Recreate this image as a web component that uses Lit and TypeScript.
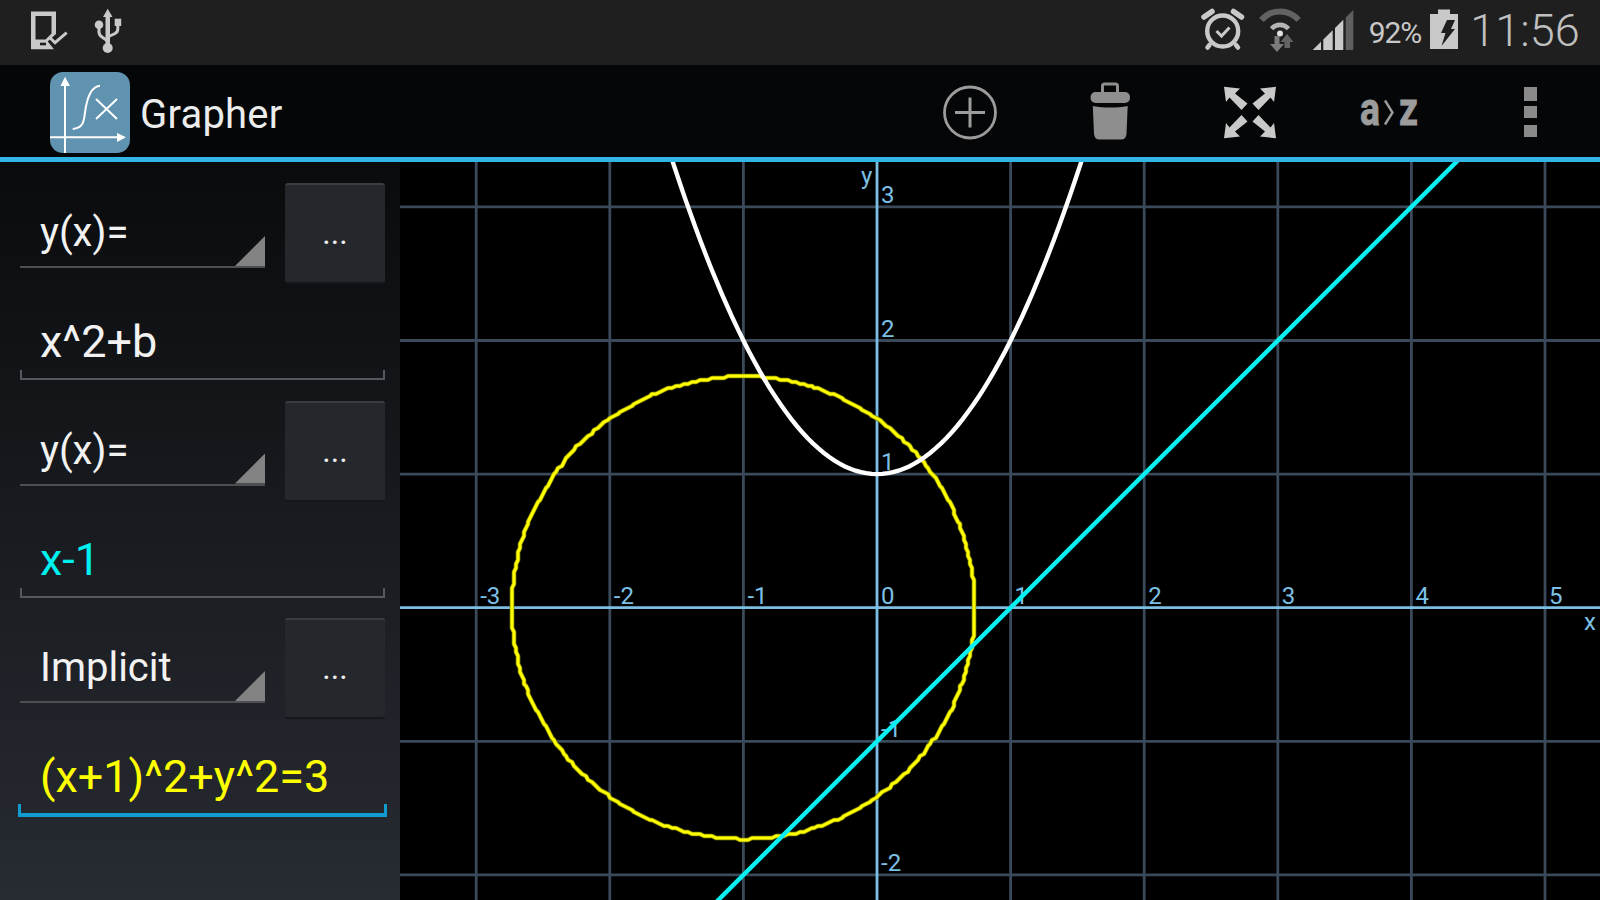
import { LitElement, html, css, svg } from "lit";
import { customElement } from "lit/decorators.js";

const OX = 877, OY = 607.7, U = 133.6;
const px = (v: number) => +(OX + v * U).toFixed(1);
const py = (v: number) => +(OY - v * U).toFixed(1);

function parabola() {
  const pts: string[] = [];
  for (let x = -1.6; x <= 1.6001; x += 0.04) pts.push(`${px(x)},${py(x * x + 1)}`);
  return pts.join(" ");
}

function circlePts() {
  const pts: string[] = [];
  const r = Math.sqrt(3) * U, cx = px(-1), cy = OY;
  const step = 2;
  for (let a = 0; a < 360; a += 1) {
    const t = (a * Math.PI) / 180;
    const x = Math.round((cx + r * Math.cos(t)) / step) * step;
    const y = Math.round((cy + r * Math.sin(t)) / step) * step;
    pts.push(`${x},${y}`);
  }
  return pts.join(" ");
}

@customElement("app-root")
export class AppRoot extends LitElement {
  static styles = css`
    :host { display: block; width: 1600px; height: 900px; overflow: hidden; font-family: Roboto, "Liberation Sans", sans-serif; background: #000; }
    svg { display: block; flex: none; }
    .status { height: 65px; background: #1f1f1f; display: flex; align-items: center; padding: 0 15px 0 20px; box-sizing: border-box; }
    .spacer { flex: 1; }
    .pct { width: 60px; text-align: center; font-size: 30px; color: #c8c8c8; font-weight: 400; letter-spacing: -1px; }
    .time { width: 120px; text-align: center; font-size: 45px; font-weight: 300; color: #c0c0c0; padding-bottom: 5px; }
    .actionbar { height: 92px; background: #050607; display: flex; align-items: center; padding-left: 50px; box-sizing: border-box; }
    .logo { margin-top: 2px; }
    .title { font-size: 40px; color: #ececec; margin-left: 10px; padding-top: 6px; letter-spacing: 0.2px; }
    .rule { height: 5px; background: #33b5e5; }
    .main { display: flex; height: 738px; }
    .side { width: 400px; flex: none; box-sizing: border-box; padding-top: 21px; background: linear-gradient(#0a0b0d, #272b32); }
    .group { height: 217.5px; }
    .row { display: flex; align-items: flex-start; padding-left: 20px; height: 100px; }
    .select { position: relative; width: 245px; height: 85px; box-sizing: border-box; border-bottom: 2px solid #4c4e50; padding-left: 20px; font-size: 40px; line-height: 100px; color: #f2f2f2; }
    .select::after { content: ""; position: absolute; right: 0; bottom: 0; width: 30px; height: 30px; background: #828282; clip-path: polygon(100% 0, 100% 100%, 0 100%); }
    .btn { width: 100px; height: 101px; flex: none; margin-left: 20px; box-sizing: border-box; background: #24272c; border-radius: 3px; border-top: 2px solid #3a3d41; border-bottom: 2px solid #15171a; color: #eee; font-size: 32px; line-height: 96px; text-align: center; }
    .edit { position: relative; margin-left: 20px; width: 365px; height: 97px; box-sizing: border-box; border-bottom: 2px solid #55585c; padding-left: 20px; font-size: 45px; line-height: 118px; color: #f2f2f2; }
    .edit::before, .edit::after { content: ""; position: absolute; bottom: -2px; width: 2px; height: 10px; background: #55585c; }
    .edit::before { left: 0; }
    .edit::after { right: 0; }
    .cyan { color: #00f0f0; }
    .yellow { color: #ffff00; }
    .focus { margin-left: 18px; width: 369px; height: 99px; padding-left: 22px; border-bottom: 4px solid #0e9ccf; line-height: 118px; }
    .focus::before, .focus::after { bottom: -4px; width: 3px; height: 13px; background: #0e9ccf; }
    .graph { flex: 1; }
    .lbl { font-family: Roboto, "Liberation Sans", sans-serif; font-size: 24px; fill: #7cc0e6; }
    .az { font-family: Roboto, "Liberation Sans", sans-serif; font-weight: 700; font-size: 46px; fill: #9c9c9c; stroke: #9c9c9c; stroke-width: 0.8px; }
  `;

  private selectRow(label: string) {
    return html`<div class="row"><div class="select">${label}</div><div class="btn">...</div></div>`;
  }

  private expandArrows() {
    const a = "1224,86.7 1240,88.5 1235,93.5 1247.5,103.5 1241.5,110 1229.5,97.5 1226,102";
    return [
      "",
      "translate(2500,0) scale(-1,1)",
      "translate(0,225) scale(1,-1)",
      "translate(2500,225) scale(-1,-1)",
    ].map((t) => svg`<polygon points=${a} transform=${t} fill="#c9c9c9"/>`);
  }

  private graph() {
    const vs = [-3, -2, -1, 1, 2, 3, 4, 5];
    const hs = [-2, -1, 1, 2, 3];
    const xl = [-3, -2, -1, 0, 1, 2, 3, 4, 5];
    const yl = [-2, -1, 1, 2, 3];
    return html`<svg class="graph" width="1200" height="738" viewBox="400 162 1200 738">
      <rect x="400" y="162" width="1200" height="738" fill="#000"/>
      ${vs.map((v) => svg`<line x1=${px(v)} x2=${px(v)} y1="162" y2="900" stroke="#3a4a5a" stroke-width="2.8"/>`)}
      ${hs.map((v) => svg`<line x1="400" x2="1600" y1=${py(v)} y2=${py(v)} stroke="#3a4a5a" stroke-width="2.8"/>`)}
      <line x1=${OX} x2=${OX} y1="162" y2="900" stroke="#7cbfe4" stroke-width="2.8"/>
      <line x1="400" x2="1600" y1=${OY} y2=${OY} stroke="#7cbfe4" stroke-width="2.8"/>
      ${xl.map((v) => svg`<text class="lbl" x=${px(v) + 4} y="604">${v}</text>`)}
      ${yl.map((v) => svg`<text class="lbl" x="881" y=${py(v) - 4}>${v}</text>`)}
      <text class="lbl" x="861" y="184">y</text>
      <text class="lbl" x="1584" y="630">x</text>
      <polygon points=${circlePts()} fill="none" stroke="#8f8f00" stroke-width="4.6" stroke-linejoin="round"/>
      <polygon points=${circlePts()} fill="none" stroke="#ffff00" stroke-width="3" stroke-linejoin="round"/>
      <polyline points=${parabola()} fill="none" stroke="#fff" stroke-width="4.4"/>
      <line x1=${px(-1.3)} y1=${py(-2.3)} x2=${px(4.4)} y2=${py(3.4)} stroke="#08f0f2" stroke-width="4.4"/>
    </svg>`;
  }

  render() {
    return html`
      <div class="status">
        <svg width="60" height="65" viewBox="20 0 60 65">
          <path fill-rule="evenodd" fill="#c9c9c9" d="M31 11.5H56V34L47.7 41.5L54 49.3H31ZM35.5 16H51.5V33.5L45.5 39.5H35.5Z"/>
          <rect x="40" y="42.7" width="6" height="2.6" fill="#1f1f1f"/>
          <path d="M49.3 37L55 42.7L66.7 32.7" fill="none" stroke="#c9c9c9" stroke-width="3"/>
        </svg>
        <svg width="50" height="65" viewBox="80 0 50 65">
          <path fill="#c9c9c9" d="M107.7 8.7L112.5 17H110V44H105.5V17H103Z"/>
          <circle cx="107.7" cy="48" r="5" fill="#c9c9c9"/>
          <circle cx="99" cy="24.7" r="4.3" fill="#c9c9c9"/>
          <rect x="114.7" y="18.7" width="6.5" height="7.3" fill="#c9c9c9"/>
          <path d="M99 28V32Q99 35 102 37L107.7 41M117.8 26V29Q117.8 32 115 33.5L107.7 37" fill="none" stroke="#c9c9c9" stroke-width="3"/>
        </svg>
        <div class="spacer"></div>
        <svg width="52" height="65" viewBox="1200 0 52 65">
          <circle cx="1222.7" cy="31" r="15.5" fill="none" stroke="#c9c9c9" stroke-width="4.4"/>
          <path d="M1216.5 31L1221.5 36L1229.5 27.5" fill="none" stroke="#c9c9c9" stroke-width="3"/>
          <path d="M1204 17L1212 11.5M1233.5 11.5L1241.5 17" stroke="#c9c9c9" stroke-width="5.5" stroke-linecap="round"/>
          <path d="M1209.5 45L1207.5 47.5M1236 45L1238 47.5" stroke="#c9c9c9" stroke-width="4.5" stroke-linecap="round"/>
        </svg>
        <svg width="55" height="65" viewBox="1252 0 55 65">
          <path d="M1261.4 20A24.5 24.5 0 0 1 1298.6 20" fill="none" stroke="#626262" stroke-width="6"/>
          <path d="M1271.6 28.8A11 11 0 0 1 1288.4 28.8" fill="none" stroke="#b5b5b5" stroke-width="4.6"/>
          <circle cx="1280" cy="33.5" r="3" fill="#e0e0e0"/>
          <path fill="#7c7c7c" d="M1274.5 36H1279.5V44H1284L1277 52L1270 44H1274.5Z"/>
          <path fill="#646464" d="M1287 34L1293.5 42H1290V48H1284.5V42H1280.5Z"/>
        </svg>
        <svg width="58" height="65" viewBox="1307 0 58 65">
          <polygon fill="#c9c9c9" points="1312.7,50 1321,50 1321,41.8"/>
          <polygon fill="#c9c9c9" points="1323.3,50 1332.7,50 1332.7,30.3 1323.3,39.5"/>
          <polygon fill="#c9c9c9" points="1335,50 1343.3,50 1343.3,19.8 1335,28"/>
          <polygon fill="#5f5f5f" points="1345.7,50 1353.3,50 1353.3,10 1345.7,17.5"/>
        </svg>
        <span class="pct">92%</span>
        <svg width="40" height="65" viewBox="1425 0 40 65">
          <path fill="#c9c9c9" d="M1438 9.5H1450V14H1458V49H1430V14H1438Z"/>
          <polygon fill="#1f1f1f" points="1447,20 1455,20 1451,29 1455,29 1441.5,46 1445.5,33 1441,33"/>
        </svg>
        <span class="time">11:56</span>
      </div>
      <div class="actionbar">
        <svg class="logo" width="80" height="81" viewBox="0 0 80 81">
          <rect x="0" y="0" width="80" height="81" rx="13" fill="#5f93b0"/>
          <path d="M15 12V81M0 65.3H68" stroke="#fff" stroke-width="2" fill="none"/>
          <path d="M15 4.7L20 14H10.5ZM76 65.3L67 61V70Z" fill="#fff"/>
          <path d="M22.7 57C37 56 33 44 37 30C39.5 20 43 14.5 50 13.7" fill="none" stroke="#fff" stroke-width="2"/>
          <path d="M46 27L67 47M67 27L46 47" stroke="#fff" stroke-width="2" fill="none"/>
        </svg>
        <span class="title">Grapher</span>
        <div class="spacer"></div>
        <svg width="140" height="92" viewBox="900 65 140 92">
          <circle cx="970" cy="112.5" r="25.5" fill="none" stroke="#9c9c9c" stroke-width="2.8"/>
          <path d="M955 112.5H985M970 97.5V127.5" stroke="#9c9c9c" stroke-width="3" fill="none"/>
        </svg>
        <svg width="140" height="92" viewBox="1040 65 140 92">
          <rect x="1102.5" y="84" width="15" height="12" rx="2" fill="none" stroke="#8e8e8e" stroke-width="3"/>
          <rect x="1090.6" y="92" width="39.4" height="11" rx="5" fill="#8e8e8e"/>
          <path fill="#8e8e8e" d="M1092.8 106C1104 108 1117 108 1127.7 106L1126.5 134Q1126 139.5 1121 139.5H1099.5Q1094.5 139.5 1094 134Z"/>
        </svg>
        <svg width="140" height="92" viewBox="1180 65 140 92">${this.expandArrows()}</svg>
        <svg width="140" height="92" viewBox="1320 65 140 92">
          <text class="az" x="1360" y="124.5" textLength="20" lengthAdjust="spacingAndGlyphs">a</text>
          <path d="M1385 100.5L1392.5 112.5L1385 124.5" fill="none" stroke="#9c9c9c" stroke-width="2.4"/>
          <text class="az" x="1399" y="124.5" textLength="19" lengthAdjust="spacingAndGlyphs">z</text>
        </svg>
        <svg width="140" height="92" viewBox="1460 65 140 92">
          <rect x="1524" y="87" width="13" height="14" fill="#8a8a8a"/>
          <rect x="1524" y="106" width="13" height="12" fill="#8a8a8a"/>
          <rect x="1524" y="125" width="13" height="12" fill="#8a8a8a"/>
        </svg>
      </div>
      <div class="rule"></div>
      <div class="main">
        <div class="side">
          <div class="group">${this.selectRow("y(x)=")}<div class="edit">x^2+b</div></div>
          <div class="group">${this.selectRow("y(x)=")}<div class="edit cyan">x-1</div></div>
          <div class="group">${this.selectRow("Implicit")}<div class="edit yellow focus">(x+1)^2+y^2=3</div></div>
        </div>
        ${this.graph()}
      </div>
    `;
  }
}
